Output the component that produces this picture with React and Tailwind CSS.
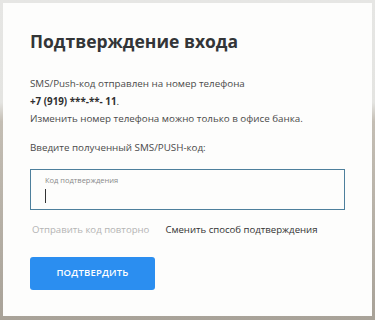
export default function App() {
  return (
    <div className="h-[320px] w-[375px] overflow-hidden bg-[linear-gradient(180deg,#e6e6e4_0%,#e4e4e1_32%,#c4beb4_38%,#a8a298_100%)] p-[3px] pb-[4px] font-['Open_Sans',sans-serif]">
      <div className="flex h-full flex-col bg-[#fdfdfc] pl-[27px] pr-[27px] pt-[26px]">
        <h1 className="text-[17.5px] font-bold leading-[24px] text-[#333537]">Подтверждение входа</h1>

        <div className="mt-[22px] text-[9.8px] leading-[17.5px] text-[#4a4a4a]">
          <p>SMS/Push-код отправлен на номер телефона</p>
          <p className="text-[#2f2f2f]">
            <span className="font-bold">+7 (919) ***-**- 11</span>.
          </p>
          <p>Изменить номер телефона можно только в офисе банка.</p>
          <p className="mt-[11.5px]">Введите полученный SMS/PUSH-код:</p>
        </div>

        <div className="mt-[12px] h-[41px] w-[315px] border-[1.5px] border-[#4d7f9c] px-[14px] pt-[5px]">
          <div className="text-[7.5px] leading-[10px] text-[#8a8a8a]">Код подтверждения</div>
          <div className="mt-[4px] h-[14px] w-px bg-[#333]" />
        </div>

        <div className="mt-[12px] flex gap-[16px] pl-[2px] text-[9.6px] leading-[16px]">
          <span className="text-[#b4b4b4]">Отправить код повторно</span>
          <span className="text-[#333]">Сменить способ подтверждения</span>
        </div>

        <button className="mt-[19px] h-[33px] w-[125px] rounded-[3px] bg-[#2b8ef0] text-[9.5px] font-semibold tracking-[0.2px] text-white">
          ПОДТВЕРДИТЬ
        </button>
      </div>
    </div>
  );
}
